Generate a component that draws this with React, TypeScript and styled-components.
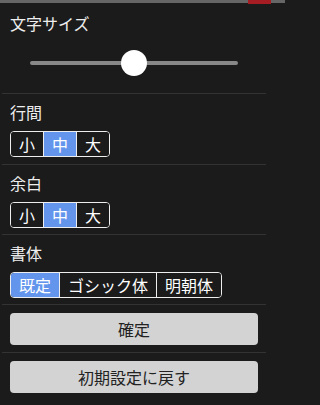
import React, { useState } from 'react';
import styled, { createGlobalStyle } from 'styled-components';

const GlobalStyle = createGlobalStyle`
  html, body {
    margin: 0;
    padding: 0;
    background: #1b1b1b;
  }
  body {
    font-family: "Noto Sans CJK JP", "Noto Sans", sans-serif;
    color: #eee;
  }
`;

const Panel = styled.div`
  width: 285px;
  height: 405px;
  background: #1b1b1b;
  overflow: hidden;
`;

const TopBar = styled.div`
  display: flex;
  height: 3px;
  background: #666;
`;

const Marker = styled.div`
  margin-left: 248px;
  width: 23px;
  height: 4px;
  background: #a51d22;
`;

const Body = styled.div`
  width: 264px;
  margin-left: 2px;
`;

const Section = styled.div<{ $pt?: number; $pb?: number }>`
  padding: ${p => p.$pt ?? 8}px 8px ${p => p.$pb ?? 6}px;
  border-bottom: 1px solid #333;
  &:last-child {
    border-bottom: none;
  }
`;

const Label = styled.div<{ $mb?: number }>`
  font-size: 16px;
  line-height: 20px;
  color: #eee;
  margin-bottom: ${p => p.$mb ?? 9}px;
`;

const SliderWrap = styled.div`
  display: flex;
  padding: 7px 20px 0;
`;

const Range = styled.input`
  -webkit-appearance: none;
  appearance: none;
  width: 100%;
  height: 26px;
  margin: 0;
  background: transparent;
  &::-webkit-slider-runnable-track {
    height: 4px;
    border-radius: 2px;
    background: #888;
  }
  &::-webkit-slider-thumb {
    -webkit-appearance: none;
    width: 26px;
    height: 26px;
    margin-top: -11px;
    border-radius: 50%;
    background: #fff;
    border: none;
  }
`;

const Group = styled.div`
  display: inline-flex;
  border: 1px solid #eee;
  border-radius: 4px;
  overflow: hidden;
`;

const Choice = styled.button<{ $active: boolean }>`
  height: 24px;
  padding: 0 8px;
  border: none;
  border-left: 1px solid #eee;
  background: ${p => (p.$active ? '#6495ed' : '#1b1b1b')};
  color: #fff;
  font-family: inherit;
  font-size: 16px;
  line-height: 24px;
  cursor: pointer;
  &:first-child {
    border-left: none;
  }
`;

const Action = styled.button`
  display: block;
  width: 100%;
  height: 32px;
  border: none;
  border-radius: 4px;
  background: #d3d3d3;
  color: #222;
  font-family: inherit;
  font-size: 16px;
  cursor: pointer;
`;

function Options({ items, init }: { items: string[]; init: number }) {
  const [sel, setSel] = useState(init);
  return (
    <Group>
      {items.map((t, i) => (
        <Choice key={t} $active={i === sel} onClick={() => setSel(i)}>
          {t}
        </Choice>
      ))}
    </Group>
  );
}

export default function App() {
  const [size, setSize] = useState(50);
  return (
    <Panel>
      <GlobalStyle />
      <TopBar>
        <Marker />
      </TopBar>
      <Body>
        <Section $pt={10} $pb={17}>
          <Label $mb={10}>文字サイズ</Label>
          <SliderWrap>
            <Range type="range" min={0} max={100} value={size} onChange={e => setSize(Number(e.target.value))} />
          </SliderWrap>
        </Section>
        <Section $pb={7}>
          <Label>行間</Label>
          <Options items={['小', '中', '大']} init={1} />
        </Section>
        <Section>
          <Label>余白</Label>
          <Options items={['小', '中', '大']} init={1} />
        </Section>
        <Section>
          <Label>書体</Label>
          <Options items={['既定', 'ゴシック体', '明朝体']} init={0} />
        </Section>
        <Section $pb={7}>
          <Action>確定</Action>
        </Section>
        <Section>
          <Action>初期設定に戻す</Action>
        </Section>
      </Body>
    </Panel>
  );
}
